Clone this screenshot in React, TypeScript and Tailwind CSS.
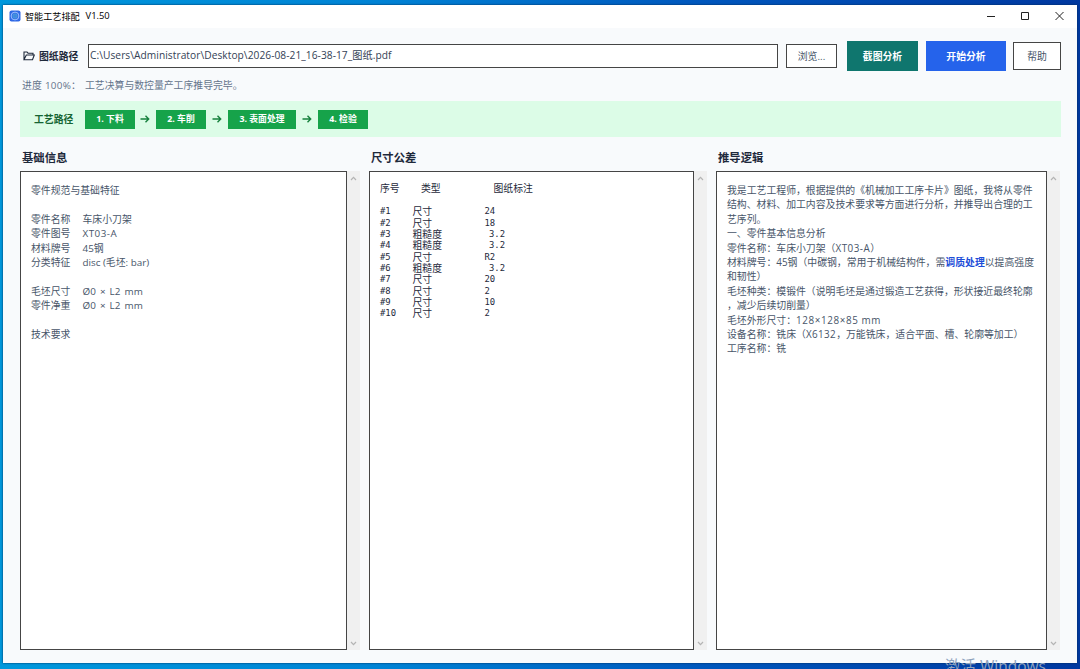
import React from "react";

const infoRows: (string[] | null)[] = [
  ["零件规范与基础特征"],
  null,
  ["零件名称", "车床小刀架"],
  ["零件图号", "XT03-A"],
  ["材料牌号", "45钢"],
  ["分类特征", "disc (毛坯: bar)"],
  null,
  ["毛坯尺寸", "Ø0 × L2 mm"],
  ["零件净重", "Ø0 × L2 mm"],
  null,
  ["技术要求"],
];

const dims = [
  ["#1", "尺寸", "24"],
  ["#2", "尺寸", "18"],
  ["#3", "粗糙度", "3.2"],
  ["#4", "粗糙度", "3.2"],
  ["#5", "尺寸", "R2"],
  ["#6", "粗糙度", "3.2"],
  ["#7", "尺寸", "20"],
  ["#8", "尺寸", "2"],
  ["#9", "尺寸", "10"],
  ["#10", "尺寸", "2"],
];

const steps = [
  { label: "1. 下料", width: "w-[50px]" },
  { label: "2. 车削", width: "w-[50px]" },
  { label: "3. 表面处理", width: "w-[68px]" },
  { label: "4. 检验", width: "w-[50px]" },
];

function Chevron({ down = false }: { down?: boolean }) {
  return (
    <svg width="7" height="5" viewBox="0 0 7 5" fill="none" stroke="#b4b4b4" strokeWidth="1.2">
      <path d={down ? "M1 1 3.5 3.7 6 1" : "M1 4 3.5 1.3 6 4"} />
    </svg>
  );
}

function Panel({ title, width, children }: { title: string; width: string; children: React.ReactNode }) {
  return (
    <section className={`flex flex-col ${width}`}>
      <h2 className="h-[23px] pl-[2px] text-[11.35px] font-bold leading-[20px] text-[#1e293b]">{title}</h2>
      <div className="flex h-[479px]">
        <div className="min-w-0 flex-1 border border-[#454545] bg-white">{children}</div>
        <div className="flex w-[13px] flex-col items-center justify-between bg-[#f0f0f0] pt-[5px] pb-[4px]">
          <Chevron />
          <Chevron down />
        </div>
      </div>
    </section>
  );
}

export default function App() {
  return (
    <div className="relative h-[669px] w-[1080px] overflow-hidden whitespace-nowrap bg-[linear-gradient(90deg,#0098dc_0%,#0083d5_35%,#0057bd_65%,#0038a0_100%)] pt-[5px] pl-[3px] font-['Open_Sans','Noto_Sans_CJK_SC',sans-serif] text-[9.85px] text-[#475569]">
      <div className="h-[658px] w-[1074px] bg-[#f8fafc] shadow-[0_0_2px_#002b55]">
        <header className="flex h-[23px] items-center bg-white pl-[6px] text-black">
          <svg className="-mt-[2px]" width="12" height="12" viewBox="0 0 12 12" fill="none">
            <rect x="0.5" y="0.5" width="11" height="11" rx="2" fill="#2f68e5" />
            <circle cx="6" cy="6" r="3.9" stroke="#a9c9ff" strokeWidth="0.9" />
            <circle cx="6" cy="6" r="2.2" fill="#3e88dd" stroke="#4fa5df" strokeWidth="0.7" />
          </svg>
          <span className="ml-[4px] text-[9.1px]">智能工艺排配</span>
          <span className="ml-[6px] text-[9.4px]">V1.50</span>
          <svg className="-mt-[2px] ml-auto mr-[12px]" width="80" height="10" viewBox="0 0 80 10" fill="none" stroke="#222" strokeWidth="1">
            <path d="M2 5.5h8M36.5 1.5h7v7h-7zM70.5 1l8 8M78.5 1l-8 8" />
          </svg>
        </header>

        <main className="px-[17px]">
          <div className="flex h-[44px] w-[1041px] items-center pt-[12px]">
            <svg className="ml-[3px] shrink-0" width="12" height="10" viewBox="0 0 12 10" fill="none" stroke="#1e293b" strokeWidth="1.1">
              <path d="M1 8.5V1h3l1 1.2h5V4M1 8.7 3.3 4h8L9.5 8.7Z" />
            </svg>
            <b className="ml-[4px] w-[49px] shrink-0 text-[#1e293b]">图纸路径</b>
            <div className="flex h-[24px] w-[690px] shrink-0 items-center border border-[#454545] bg-white pl-[1px] text-[#334155]">
              <span className="text-[10.2px] tracking-[0.05px]">C:\Users\Administrator\Desktop\2026-08-21_16-38-17_图纸.pdf</span>
            </div>
            <button className="ml-[8px] h-[24px] w-[51px] shrink-0 border border-[#454545] bg-white">浏览...</button>
            <button className="ml-[10px] h-[30px] w-[71px] shrink-0 bg-[#0f766e] font-bold text-white">截图分析</button>
            <button className="ml-[8px] h-[30px] w-[80px] shrink-0 bg-[#2563eb] font-bold text-white">开始分析</button>
            <button className="ml-[7px] h-[28px] w-[48px] shrink-0 border border-[#454545] bg-white">帮助</button>
          </div>

          <div className="flex h-[29px] items-center pb-[2px] pl-[2px] text-[#64748b]">
            <span className="w-[63px] tracking-[0.25px]">进度 100%：</span>
            <span>工艺决算与数控量产工序推导完毕。</span>
          </div>

          <div className="flex h-[36px] w-[1041px] items-center bg-[#dcfce7] pl-[14px]">
            <b className="w-[51px] font-bold text-[#166534]">工艺路径</b>
            {steps.map((s, i) => (
              <React.Fragment key={s.label}>
                {i > 0 && (
                  <svg className={i === 1 ? "mr-[6px] ml-[5px]" : "mx-[6px]"} width="10" height="10" viewBox="0 0 10 10" fill="none" stroke="#15803d" strokeWidth="1.4">
                    <path d="M.5 5h8M5.5 1.8 8.7 5 5.5 8.2" />
                  </svg>
                )}
                <span className={`flex h-[19px] items-center justify-center bg-[#16a34a] pt-px text-[8.8px] font-bold text-white ${s.width}`}>{s.label}</span>
              </React.Fragment>
            ))}
          </div>

          <div className="flex gap-[9px] pt-[11px]">
            <Panel title="基础信息" width="w-[340px]">
              <div className="pt-[11px] pl-[10px]">
                {infoRows.map((row, i) => (
                  <div key={i} className="flex h-[14.4px] leading-[14.4px]">
                    {row && <span className={row.length > 1 ? "w-[51.5px]" : ""}>{row[0]}</span>}
                    {row && row[1] && (
                      <span
                        className={
                          row[1].startsWith("Ø")
                            ? "tracking-[0.2px] [word-spacing:1px]"
                            : row[1].startsWith("XT")
                              ? "tracking-[0.5px]"
                              : ""
                        }
                      >
                        {row[1]}
                      </span>
                    )}
                  </div>
                ))}
              </div>
            </Panel>

            <Panel title="尺寸公差" width="w-[338px]">
              <div className="pt-[10px] pl-[10px] font-['DejaVu_Sans_Mono','Noto_Sans_CJK_SC',monospace] text-[#1e293b]">
                <div className="flex h-[24.4px] leading-[13px]">
                  <span className="w-[41px]">序号</span>
                  <span className="w-[72.5px]">类型</span>
                  <span>图纸标注</span>
                </div>
                {dims.map(([id, kind, value]) => (
                  <div key={id} className="flex h-[11.35px] leading-[11.35px]">
                    <span className="w-[32.5px] text-[8.9px]">{id}</span>
                    <span className="w-[72px]">{kind}</span>
                    <span className={`text-[8.9px] ${kind === "粗糙度" ? "pl-[4.5px]" : ""}`}>{value}</span>
                  </div>
                ))}
              </div>
            </Panel>

            <Panel title="推导逻辑" width="w-[344px]">
              <div className="pt-[11px] pl-[10px] text-[9.87px] leading-[14.4px]">
                <p>我是工艺工程师，根据提供的《机械加工工序卡片》图纸，我将从零件</p>
                <p>结构、材料、加工内容及技术要求等方面进行分析，并推导出合理的工</p>
                <p>艺序列。</p>
                <p>一、零件基本信息分析</p>
                <p>零件名称：车床小刀架（<span className="tracking-[0.5px]">XT03-A</span>）</p>
                <p>材料牌号：45钢（中碳钢，常用于机械结构件，需<b className="text-[#1d4ed8]">调质处理</b>以提高强度</p>
                <p>和韧性）</p>
                <p>毛坯种类：模锻件（说明毛坯是通过锻造工艺获得，形状接近最终轮廓</p>
                <p>，减少后续切削量）</p>
                <p>毛坯外形尺寸：<span className="tracking-[0.6px]">128×128×85 mm</span></p>
                <p>设备名称：铣床（<span className="tracking-[0.4px]">X6132</span>，万能铣床，适合平面、槽、轮廓等加工）</p>
                <p>工序名称：铣</p>
              </div>
            </Panel>
          </div>
        </main>
      </div>
      <div className="absolute left-[945px] top-[657px] text-[15.5px] leading-[18px] text-[#8fa3bd]">激活 Windows</div>
    </div>
  );
}
